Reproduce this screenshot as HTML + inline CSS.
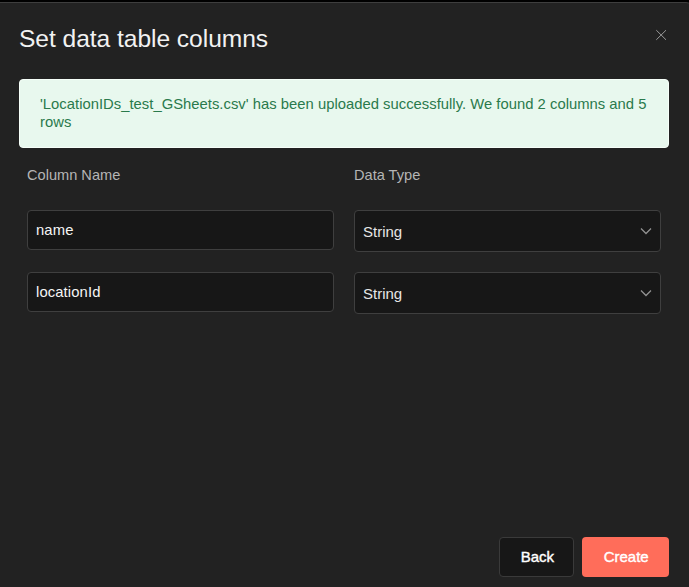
<!DOCTYPE html>
<html>
<head>
<meta charset="utf-8">
<style>
html,body{margin:0;padding:0;width:689px;height:587px;overflow:hidden;background:#000;}
body{font-family:"Liberation Sans",sans-serif;position:relative;}
.modal{position:absolute;left:-12px;top:2px;width:706px;height:620px;background:#222222;border:1px solid #3e3e3e;border-radius:8px;box-sizing:border-box;}
.abs{position:absolute;white-space:nowrap;}
.title{left:19px;top:25px;font-size:24.6px;letter-spacing:-0.05px;color:#f2f2f2;line-height:28px;}
.close{left:655px;top:29px;width:12px;height:12px;}
.alert{left:19px;top:79px;width:650px;height:69px;box-sizing:border-box;background:#e8f8ee;border:1px solid #f6fff9;border-radius:4px;}
.alert-text{left:40px;top:95px;font-size:14.8px;letter-spacing:0.02px;line-height:18px;color:#2a7a4c;width:620px;white-space:normal;}
.label{font-size:14.6px;color:#b5b5b5;line-height:18px;}
.inp{box-sizing:border-box;background:#171717;border:1px solid #3f3f3f;border-radius:4px;}
.itxt{font-size:14.8px;color:#f5f5f5;line-height:18px;letter-spacing:0.12px;}
.stxt{font-size:15px;color:#e6e6e6;line-height:18px;}
.btn{box-sizing:border-box;border-radius:4px;}
.btxt{font-size:15px;font-weight:400;color:#fff;line-height:18px;-webkit-text-stroke:0.4px #fff;}
</style>
</head>
<body>
<div class="modal"></div>
<div class="abs title">Set data table columns</div>
<svg class="abs close" viewBox="0 0 12 12"><path d="M1.3 1.2L11 10.8M11 1.2L1.3 10.8" stroke="#9a9a9a" stroke-width="1" fill="none"/></svg>

<div class="abs alert"></div>
<div class="abs alert-text">'LocationIDs_test_GSheets.csv' has been uploaded successfully. We found 2 columns and 5 rows</div>

<div class="abs label" style="left:27px;top:166px;">Column Name</div>
<div class="abs label" style="left:354px;top:166px;">Data Type</div>

<div class="abs inp" style="left:27px;top:210px;width:307px;height:40px;"></div>
<div class="abs itxt" style="left:36px;top:221px;">name</div>
<div class="abs inp" style="left:354px;top:210px;width:307px;height:42px;"></div>
<div class="abs stxt" style="left:363px;top:223px;">String</div>
<svg class="abs" style="left:640px;top:227px;" width="12" height="8" viewBox="0 0 12 8"><path d="M1 1.5L6 6.5L11 1.5" stroke="#929292" stroke-width="1.25" fill="none"/></svg>

<div class="abs inp" style="left:27px;top:272px;width:307px;height:40px;"></div>
<div class="abs itxt" style="left:36px;top:283px;">locationId</div>
<div class="abs inp" style="left:354px;top:272px;width:307px;height:42px;"></div>
<div class="abs stxt" style="left:363px;top:285px;">String</div>
<svg class="abs" style="left:640px;top:289px;" width="12" height="8" viewBox="0 0 12 8"><path d="M1 1.5L6 6.5L11 1.5" stroke="#929292" stroke-width="1.25" fill="none"/></svg>

<div class="abs btn" style="left:499px;top:537px;width:75px;height:40px;background:#171717;border:1px solid #3a3a3a;"></div>
<div class="abs btxt" style="left:520.7px;top:548px;">Back</div>
<div class="abs btn" style="left:582px;top:537px;width:87px;height:40px;background:#ff6d5a;"></div>
<div class="abs btxt" style="left:603.7px;top:548px;">Create</div>
</body>
</html>
